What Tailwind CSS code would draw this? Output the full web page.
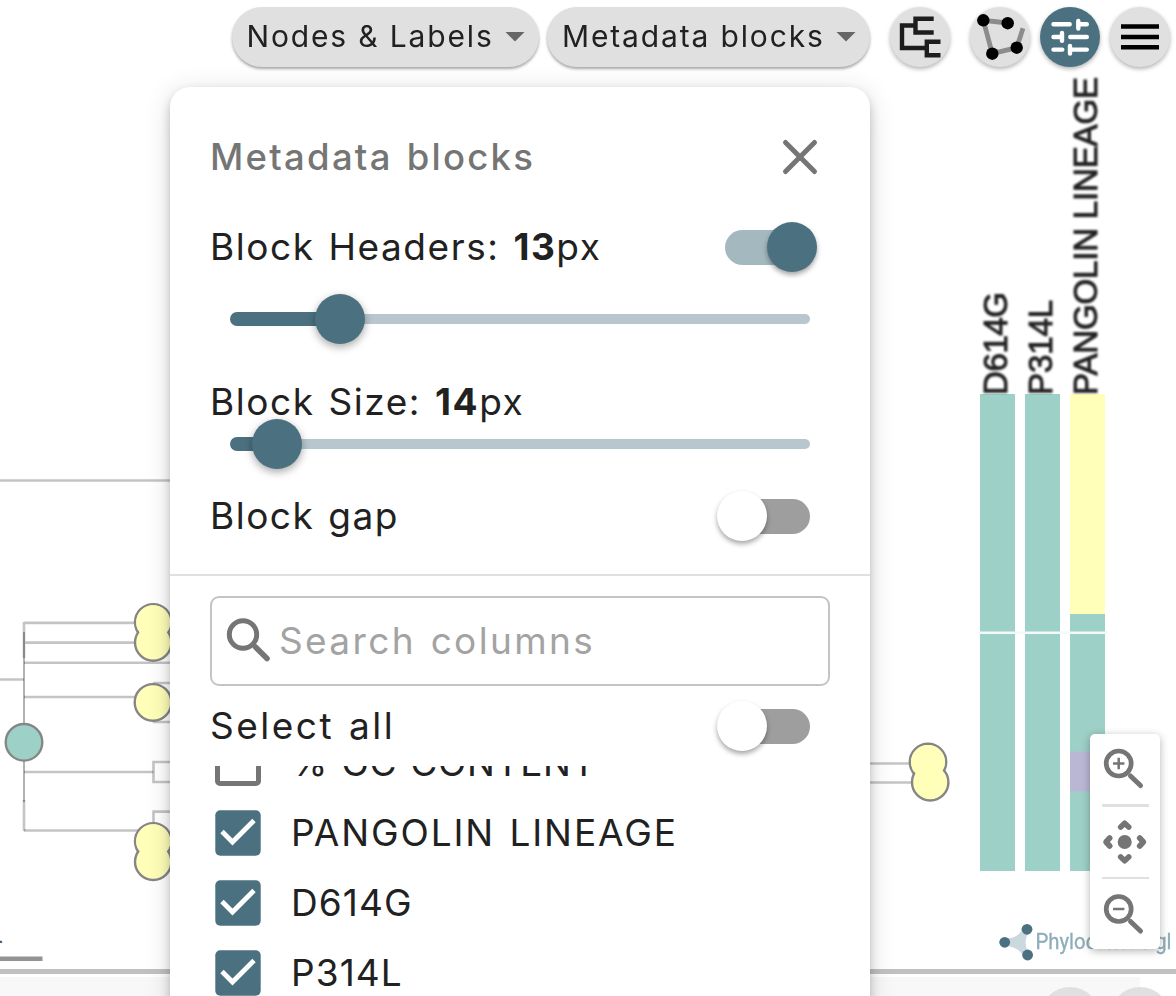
<!DOCTYPE html>
<html lang="en">
<head>
<meta charset="utf-8">
<title>Metadata blocks</title>
<script src="https://cdn.jsdelivr.net/npm/@tailwindcss/browser@4"></script>
</head>
<body class="bg-white">
<div class="relative w-[1176px] h-[996px] overflow-hidden bg-white text-[#212121] font-[Inter,sans-serif]">

  <!-- Tree canvas -->
  <svg class="absolute inset-0" width="1176" height="996" viewBox="0 0 1176 996">
    <g fill="none" stroke="#000" stroke-opacity=".23" stroke-width="2.6">
      <path d="M0 480.5H172M0 679.5H24M24 622V658M24 622.9H136M24 642.6H136M24 662.8H172M24 697H136M24 772H153.5M24 830.5H138"/>
      <path d="M24 632V802M24 658V762" stroke-opacity=".3" stroke-width="2"/>
      <path d="M24 800V831"/>
      <path d="M172 762H153.5V782H172M172 811.6H153.5V830M153 683H172M153 722H172M868 763.5H912M868 782.5H912"/>
    </g>
    <g fill="#ffffb9" stroke="#868686" stroke-width="2.4" style="filter:blur(.4px)">
      <circle cx="153.200" cy="622.300" r="18.200"/><circle cx="153.200" cy="642.600" r="18.200"/>
      <circle cx="153" cy="702.400" r="18.300"/>
      <circle cx="153.200" cy="841.300" r="18.200"/><circle cx="153.200" cy="861.800" r="18.200"/>
      <circle cx="928" cy="762" r="18.200"/><circle cx="930.200" cy="782.300" r="18.200"/>
      <circle cx="24" cy="742.300" r="18.300" fill="#9dd0c7"/>
    </g>
    <g fill="#ffffb9">
      <circle cx="153.200" cy="622.300" r="17"/><circle cx="153.200" cy="841.300" r="17"/><circle cx="928" cy="762" r="17"/>
    </g>
    <g fill="#9dd0c7">
      <rect x="980" y="394" width="35" height="477"/>
      <rect x="1025" y="394" width="35" height="477"/>
      <rect x="1070" y="394" width="35" height="477"/>
    </g>
    <rect x="1070" y="394" width="35" height="220" fill="#ffffb9"/>
    <rect x="1070" y="751.500" width="35" height="40" fill="#bab7d5"/>
    <rect x="978" y="631.500" width="130" height="2.500" fill="#f4faf9"/>
    <g font-family="Liberation Sans, sans-serif" font-size="33" fill="#222" stroke="#222" stroke-width="1" style="filter:blur(.8px)">
      <text transform="translate(1007 395) rotate(-90)" textLength="103">D614G</text>
      <text transform="translate(1052 395) rotate(-90)" textLength="95">P314L</text>
      <text transform="translate(1097 395) rotate(-90)" textLength="318">PANGOLIN LINEAGE</text>
    </g>
    <text x="-15.500" y="948" font-family="Liberation Sans, sans-serif" font-size="33" fill="#555">4</text>
    <rect x="0" y="956.500" width="42.500" height="4.500" fill="#939393"/>
    <g style="filter:blur(.7px)">
      <path d="M1005 938.500Q1018 939 1023 928L1029 932Q1022 942 1029 953L1024 957Q1018 946 1005 946Z" fill="#cbd8dd"/>
      <g fill="#4b7180"><circle cx="1004.700" cy="942.300" r="5.400"/><circle cx="1027" cy="929.300" r="5.400"/><circle cx="1027.600" cy="955" r="5.400"/></g>
      <text x="1035.500" y="948.500" font-family="Roboto, sans-serif" font-size="22" fill="#8eadb9" stroke="#8eadb9" stroke-width=".3" textLength="136" lengthAdjust="spacingAndGlyphs">Phylocanvas.gl</text>
    </g>
  </svg>

  <!-- Lower pane edge -->
  <div class="absolute inset-x-0 top-[969px] h-[27px] overflow-hidden border-t-5 border-[#c1c1c1] bg-white pt-[3px]">
    <div class="h-full w-[1140px] bg-[#f8f8f8]"></div>
    <div class="absolute right-[6px] top-[13px] flex gap-[10px]">
      <div class="size-[60px] rounded-full bg-[#e0e0e0]"></div>
      <div class="size-[60px] rounded-full bg-[#e0e0e0]"></div>
    </div>
  </div>

  <!-- Settings panel -->
  <section class="absolute left-[170px] top-[87px] flex h-[1000px] w-[700px] flex-col rounded-[20px] bg-white shadow-[0_5px_12px_-2px_rgba(0,0,0,.3),0_4px_28px_rgba(0,0,0,.13)] [word-spacing:2px]">
    <div class="flex h-[120px] items-center justify-between pt-5 pl-10 pr-[50px]">
      <h2 class="text-[36.5px] font-medium tracking-[2.25px] text-[#757575]">Metadata blocks</h2>
      <svg width="40" height="40" viewBox="0 0 40 40" stroke="#757575" stroke-width="5" stroke-linecap="round"><path d="M5.500 5.500L34.500 34.500M34.500 5.500L5.500 34.500"/></svg>
    </div>
    <div class="flex h-20 items-center justify-between pl-10 pr-[53px]">
      <span class="text-[37px] tracking-[1.55px]">Block Headers: <b>13</b>px</span>
      <div class="flex h-[35px] w-[92px] items-center justify-end">
        <div class="-mr-[42px] h-[35px] w-[85px] rounded-full bg-[#a4b8bf]"></div>
        <div class="size-[50px] shrink-0 rounded-full bg-[#4b7180] shadow-[0_3px_5px_rgba(0,0,0,.35)]"></div>
      </div>
    </div>
    <div class="flex h-[64px] items-center pl-[60px] pr-[60px]">
      <div class="h-[14px] w-[95px] rounded-l-full bg-[#4b7180]"></div>
      <div class="z-10 -mx-[10px] size-[50px] shrink-0 rounded-full bg-[#4b7180] shadow-[0_3px_8px_rgba(0,0,0,.35)]"></div>
      <div class="h-[10px] flex-1 rounded-r-full bg-[#b8c7ce]"></div>
    </div>
    <div class="flex h-[80px] items-end pl-10 pb-px">
      <span class="text-[37px] leading-[56px] tracking-[1.55px]">Block Size: <b>14</b>px</span>
    </div>
    <div class="-mt-[12px] flex h-[50px] items-center pl-[60px] pr-[60px]">
      <div class="h-[14px] w-[32px] rounded-l-full bg-[#4b7180]"></div>
      <div class="z-10 -mx-[10px] size-[50px] shrink-0 rounded-full bg-[#4b7180] shadow-[0_3px_8px_rgba(0,0,0,.35)]"></div>
      <div class="h-[10px] flex-1 rounded-r-full bg-[#b8c7ce]"></div>
    </div>
    <div class="flex h-[107px] items-center justify-between border-b-2 border-[#e0e0e0] pl-10 pr-[60px] pb-[11px]">
      <span class="text-[37px] tracking-[1.5px]">Block gap</span>
      <div class="flex h-[35px] w-[93px] items-center">
        <div class="z-10 size-[50px] shrink-0 rounded-full bg-white shadow-[0_3px_5px_rgba(0,0,0,.35)]"></div>
        <div class="-ml-[42px] h-[35px] w-[85px] rounded-full bg-[#9e9e9e]"></div>
      </div>
    </div>
    <div class="mx-10 mt-5 flex h-[90px] shrink-0 items-center rounded-[9px] border-2 border-[#c4c4c4] pl-[13px]">
      <svg width="46" height="46" viewBox="0 0 46 46" fill="none" stroke="#757575" stroke-width="5"><circle cx="18" cy="16.500" r="13.700"/><path d="M30.500 29L42 40.500" stroke-width="5.500" stroke-linecap="round"/></svg>
      <span class="ml-[8px] text-[37px] tracking-[2.35px] text-[#a3a3a3]">Search columns</span>
    </div>
    <div class="flex h-20 shrink-0 items-center justify-between pl-10 pr-[60px]">
      <span class="text-[37px] tracking-[2.5px]">Select all</span>
      <div class="flex h-[35px] w-[93px] items-center">
        <div class="z-10 size-[50px] shrink-0 rounded-full bg-white shadow-[0_3px_5px_rgba(0,0,0,.35)]"></div>
        <div class="-ml-[42px] h-[35px] w-[85px] rounded-full bg-[#9e9e9e]"></div>
      </div>
    </div>
    <div class="flex flex-1 flex-col overflow-hidden pl-[45px] text-[37px]">
      <div class="-mt-[38px] flex h-[70px] shrink-0 items-center gap-[30px]">
        <div class="size-[46px] rounded-[5px] border-5 border-[#757575]"></div>
        <span class="tracking-[.7px]">% GC CONTENT</span>
      </div>
      <div class="flex h-[70px] shrink-0 items-center gap-[30px]">
        <svg width="46" height="46" viewBox="0 0 46 46"><rect x=".3" y=".3" width="45.400" height="45.400" rx="5" fill="#4b7180"/><path d="M7 21.500L17.500 32L39 10.500" fill="none" stroke="#fff" stroke-width="4.800"/></svg>
        <span class="tracking-[1.9px]">PANGOLIN LINEAGE</span>
      </div>
      <div class="flex h-[70px] shrink-0 items-center gap-[30px]">
        <svg width="46" height="46" viewBox="0 0 46 46"><rect x=".3" y=".3" width="45.400" height="45.400" rx="5" fill="#4b7180"/><path d="M7 21.500L17.500 32L39 10.500" fill="none" stroke="#fff" stroke-width="4.800"/></svg>
        <span class="tracking-[1.1px]">D614G</span>
      </div>
      <div class="flex h-[70px] shrink-0 items-center gap-[30px]">
        <svg width="46" height="46" viewBox="0 0 46 46"><rect x=".3" y=".3" width="45.400" height="45.400" rx="5" fill="#4b7180"/><path d="M7 21.500L17.500 32L39 10.500" fill="none" stroke="#fff" stroke-width="4.800"/></svg>
        <span class="tracking-[1.1px]">P314L</span>
      </div>
    </div>
  </section>

  <!-- Toolbar -->
  <header class="relative flex items-start justify-end pt-[7px] pr-[6px] [word-spacing:3px]">
    <button class="flex h-[60px] w-[307px] items-center justify-between rounded-full bg-[#e0e0e0] pl-[15px] pr-[14px] pb-px text-[30px] tracking-[1.85px] whitespace-nowrap shadow-[0_2px_3px_rgba(0,0,0,.35)]">Nodes &amp; Labels<svg width="20" height="10" viewBox="0 0 20 10"><path d="M.5 0H19.500L10 9.500Z" fill="#666"/></svg></button>
    <button class="ml-[8.500px] mr-[20px] flex h-[60px] w-[323px] items-center justify-between rounded-full bg-[#e0e0e0] pl-[15px] pr-[14px] pb-px text-[30px] tracking-[1.85px] whitespace-nowrap shadow-[0_2px_3px_rgba(0,0,0,.35)]">Metadata blocks<svg width="20" height="10" viewBox="0 0 20 10"><path d="M.5 0H19.500L10 9.500Z" fill="#666"/></svg></button>
    <button class="mr-5 size-[60px] rounded-full bg-[#e0e0e0] shadow-[0_2px_4px_rgba(0,0,0,.3)]">
      <svg width="60" height="60" viewBox="0 0 60 60" fill="none" stroke="#1d1d1d" stroke-width="4.400"><path d="M25.500 18.500H12V41H36.800M43.700 11.800H25.500V25.500H43.700M50.500 34.700H36.800V48.200H50.500"/></svg>
    </button>
    <button class="mr-[10px] size-[60px] rounded-full bg-[#e0e0e0] shadow-[0_2px_4px_rgba(0,0,0,.3)]">
      <svg width="60" height="60" viewBox="0 0 60 60"><path d="M37.700 16L13.300 13.300L22.300 46.700L46.700 40.700L53 21.300" fill="none" stroke="#8c8c8c" stroke-width="4.800"/><circle cx="13.300" cy="13.300" r="6.200"/><circle cx="37.700" cy="16.200" r="6.200"/><circle cx="46.700" cy="40.700" r="6.200"/><circle cx="22.300" cy="46.700" r="6.200"/></svg>
    </button>
    <button class="mr-[10px] size-[60px] rounded-full bg-[#4b7180] shadow-[0_2px_4px_rgba(0,0,0,.3)]">
      <svg width="60" height="60" viewBox="0 0 60 60" stroke="#fff" stroke-width="4.400" stroke-linecap="round"><path d="M13.500 17.300H29.700M38.300 14V21.500M38.300 17.300H46.800M13.500 30H22M22 26V33.800M30.300 30H46.800M13.500 42.600H22.300M30 39V46.500M30 42.600H46.800"/></svg>
    </button>
    <button class="size-[60px] rounded-full bg-[#e0e0e0] shadow-[0_2px_4px_rgba(0,0,0,.3)]">
      <svg width="60" height="60" viewBox="0 0 60 60" stroke="#000" stroke-width="4.600"><path d="M11 19.500H49M11 30H49M11 40.300H49"/></svg>
    </button>
  </header>

  <!-- Zoom controls -->
  <div class="absolute left-[1090px] top-[734px] flex h-[215px] w-[70px] flex-col items-center rounded-[5px] bg-white shadow-[0_2px_8px_rgba(0,0,0,.3)]">
    <svg class="h-[70px] w-[70px]" viewBox="0 0 70 70" fill="none" stroke="#757575"><circle cx="28.700" cy="29.500" r="12.500" stroke-width="4.700"/><path d="M40.500 42L50.500 51.500" stroke-width="5" stroke-linecap="round"/><path d="M23 29.500H34.400M28.700 23.800V35.200" stroke-width="2.500"/></svg>
    <div class="h-[2.500px] w-[47px] bg-[#e0e0e0]"></div>
    <svg class="h-[70px] w-[70px]" viewBox="0 0 70 70" fill="none" stroke="#757575" stroke-width="5.600" stroke-linejoin="round" stroke-linecap="round"><circle cx="34.700" cy="35" r="7" fill="#757575" stroke="none"/><path d="M30.700 20L34.700 16.300L38.700 20M30.700 50L34.700 53.700L38.700 50M19.700 31L16 35L19.700 39M49.700 31L53.400 35L49.700 39"/></svg>
    <div class="h-[2px] w-[47px] bg-[#e0e0e0]"></div>
    <svg class="h-[70px] w-[70px]" viewBox="0 0 70 70" fill="none" stroke="#757575"><circle cx="28.700" cy="30" r="12.500" stroke-width="4.700"/><path d="M40.500 42.500L50.500 52" stroke-width="5" stroke-linecap="round"/><path d="M23 30H34.400" stroke-width="2.500"/></svg>
  </div>
</div>
</body>
</html>
